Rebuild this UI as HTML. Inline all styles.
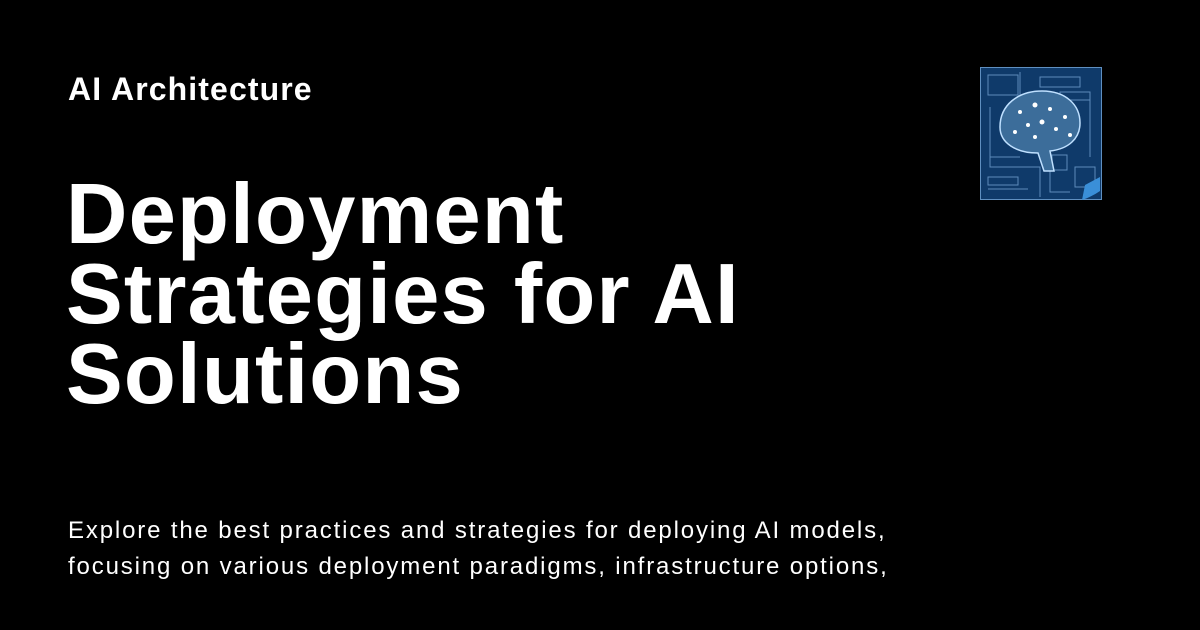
<!DOCTYPE html><html><head><style>
body{margin:0;width:1200px;height:630px;background:#000;overflow:hidden;font-family:"Liberation Sans",sans-serif;color:#fff;position:relative}
.cat{position:absolute;left:68px;top:71px;font-size:32px;font-weight:bold;letter-spacing:1.1px}
.t{position:absolute;left:66px;top:175px;font-size:85px;font-weight:bold;line-height:80px;letter-spacing:1.2px}
.d{position:absolute;left:68px;top:513px;font-size:24px;line-height:36px;width:1000px;letter-spacing:1.85px}
svg{position:absolute;left:980px;top:67px}
</style></head><body>
<div class="cat">AI Architecture</div>
<div class="t">Deployment<br>Strategies for AI<br>Solutions</div>
<div class="d">Explore the best practices and strategies for deploying AI models,<br>focusing on various deployment paradigms, infrastructure options,</div>
<svg width="122" height="133" viewBox="0 0 122 133">
<rect x="0" y="0" width="122" height="133" fill="#0f3a6a" stroke="#5f8fc0" stroke-width="2"/>
<g stroke="#6fa0d0" stroke-width="1" fill="none" opacity=".8">
<path d="M8 8h30v20h-30zM40 5v25M60 10h40v10h-40zM80 25h30v8h-30zM110 30v60M10 40v60h20M10 90h30M20 100h40v30M70 95v30h20M95 100h20v20h-20zM8 110h30v8h-30zM8 122h40M72 88h15v15h-15z"/>
</g>
<path d="M20 60c0-22 18-36 42-36s38 14 38 32c0 16-12 26-30 28l4 20h-10l-6-18c-22 0-38-10-38-26z" fill="#3c6d9a" stroke="#bfe0ff" stroke-width="1.5"/>
<g fill="#fff"><circle cx="40" cy="45" r="2"/><circle cx="55" cy="38" r="2.5"/><circle cx="70" cy="42" r="2"/><circle cx="85" cy="50" r="2"/><circle cx="48" cy="58" r="2"/><circle cx="62" cy="55" r="2.5"/><circle cx="76" cy="62" r="2"/><circle cx="35" cy="65" r="2"/><circle cx="55" cy="70" r="2"/><circle cx="90" cy="68" r="2"/></g>
<path d="M105 118l15-8v14c-6 4-12 7-18 9z" fill="#3a8fd8"/>
</svg>
</body></html>
